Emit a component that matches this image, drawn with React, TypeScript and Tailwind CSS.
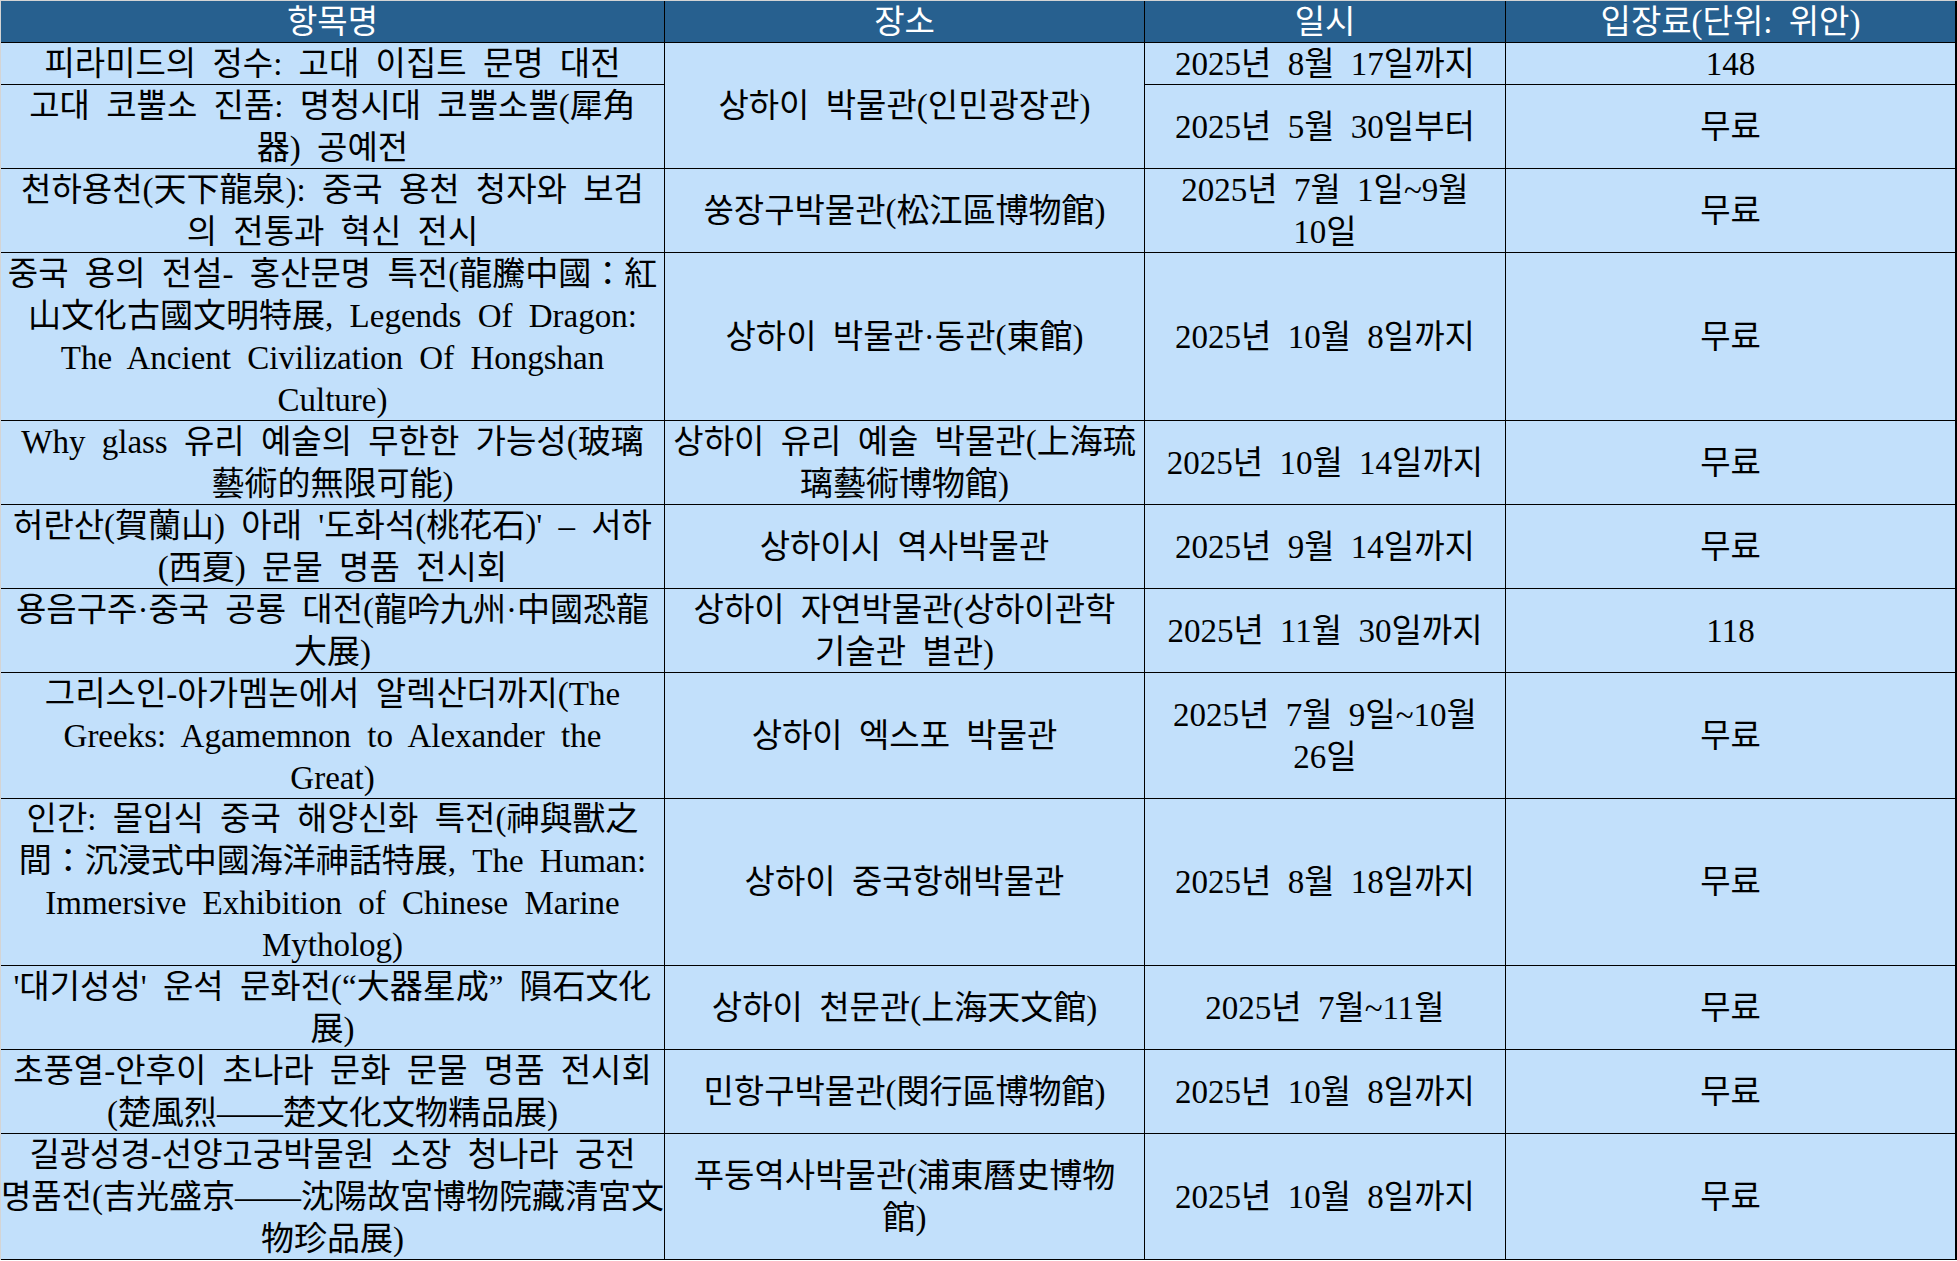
import React from "react";

type Row = {
  name: string[];
  place?: string[];
  placeSpan?: number;
  date: string[];
  fee: string;
};

const rows: Row[] = [
  {
    name: ["피라미드의 정수: 고대 이집트 문명 대전"],
    place: ["상하이 박물관(인민광장관)"],
    placeSpan: 2,
    date: ["2025년 8월 17일까지"],
    fee: "148",
  },
  {
    name: ["고대 코뿔소 진품: 명청시대 코뿔소뿔(犀角", "器) 공예전"],
    date: ["2025년 5월 30일부터"],
    fee: "무료",
  },
  {
    name: ["천하용천(天下龍泉): 중국 용천 청자와 보검", "의 전통과 혁신 전시"],
    place: ["쑹장구박물관(松江區博物館)"],
    date: ["2025년 7월 1일~9월", "10일"],
    fee: "무료",
  },
  {
    name: [
      "중국 용의 전설- 홍산문명 특전(龍騰中國：紅",
      "山文化古國文明特展, Legends Of Dragon:",
      "The Ancient Civilization Of Hongshan",
      "Culture)",
    ],
    place: ["상하이 박물관·동관(東館)"],
    date: ["2025년 10월 8일까지"],
    fee: "무료",
  },
  {
    name: ["Why glass 유리 예술의 무한한 가능성(玻璃", "藝術的無限可能)"],
    place: ["상하이 유리 예술 박물관(上海琉", "璃藝術博物館)"],
    date: ["2025년 10월 14일까지"],
    fee: "무료",
  },
  {
    name: ["허란산(賀蘭山) 아래 '도화석(桃花石)' – 서하", "(西夏) 문물 명품 전시회"],
    place: ["상하이시 역사박물관"],
    date: ["2025년 9월 14일까지"],
    fee: "무료",
  },
  {
    name: ["용음구주·중국 공룡 대전(龍吟九州·中國恐龍", "大展)"],
    place: ["상하이 자연박물관(상하이관학", "기술관 별관)"],
    date: ["2025년 11월 30일까지"],
    fee: "118",
  },
  {
    name: ["그리스인-아가멤논에서 알렉산더까지(The", "Greeks: Agamemnon to Alexander the", "Great)"],
    place: ["상하이 엑스포 박물관"],
    date: ["2025년 7월 9일~10월", "26일"],
    fee: "무료",
  },
  {
    name: [
      "인간: 몰입식 중국 해양신화 특전(神與獸之",
      "間：沉浸式中國海洋神話特展, The Human:",
      "Immersive Exhibition of Chinese Marine",
      "Mytholog)",
    ],
    place: ["상하이 중국항해박물관"],
    date: ["2025년 8월 18일까지"],
    fee: "무료",
  },
  {
    name: ["'대기성성' 운석 문화전(“大器星成” 隕石文化", "展)"],
    place: ["상하이 천문관(上海天文館)"],
    date: ["2025년 7월~11월"],
    fee: "무료",
  },
  {
    name: ["초풍열-안후이 초나라 문화 문물 명품 전시회", "(楚風烈——楚文化文物精品展)"],
    place: ["민항구박물관(閔行區博物館)"],
    date: ["2025년 10월 8일까지"],
    fee: "무료",
  },
  {
    name: ["길광성경-선양고궁박물원 소장 청나라 궁전", "명품전(吉光盛京——沈陽故宮博物院藏清宮文", "物珍品展)"],
    place: ["푸둥역사박물관(浦東曆史博物", "館)"],
    date: ["2025년 10월 8일까지"],
    fee: "무료",
  },
];

function Lines({ lines }: { lines: string[] }) {
  return (
    <div className="flex flex-col items-center">
      {lines.map((l, i) => (
        <span key={i} className="whitespace-pre leading-[42px]">
          {l}
        </span>
      ))}
    </div>
  );
}

const cell =
  "flex items-center justify-center bg-[#c2e0fb] border-r border-b border-black text-black";

export default function App() {
  return (
    <div
      className="w-[1957px] border-t border-l border-[#d4d4d4] text-[33px] [word-spacing:8px]"
      style={{ fontFamily: '"Liberation Serif", "Noto Sans CJK KR", serif' }}
    >
      <div className="grid grid-cols-[664px_480px_361px_451px] grid-rows-[42px_42px_84px_84px_168px_84px_84px_84px_126px_167px_84px_84px_126px]">
        {/* header */}
        {["항목명", "장소", "일시", "입장료(단위: 위안)"].map((t, i) => (
          <div
            key={t}
            className={`flex items-center justify-center bg-[#27608f] text-white border-b border-black ${
              i === 3 ? "border-r-2" : "border-r"
            } leading-[42px]`}
          >
            {t}
          </div>
        ))}

        {rows.map((r, i) => (
          <React.Fragment key={i}>
            <div className={cell}>
              <Lines lines={r.name} />
            </div>
            {r.place && (
              <div className={`${cell} ${r.placeSpan === 2 ? "row-span-2" : ""}`}>
                <Lines lines={r.place} />
              </div>
            )}
            <div className={cell}>
              <Lines lines={r.date} />
            </div>
            <div className={`${cell} border-r-2`}>
              <Lines lines={[r.fee]} />
            </div>
          </React.Fragment>
        ))}
      </div>
    </div>
  );
}
